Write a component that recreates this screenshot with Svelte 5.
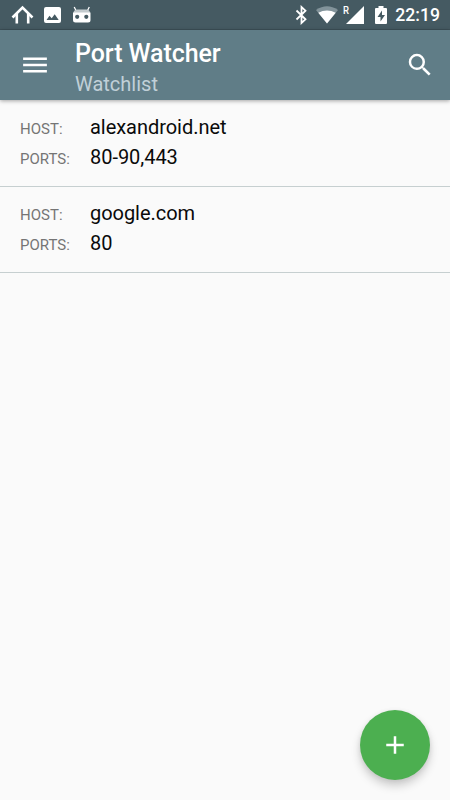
<script lang="ts">
  type WatchItem = {
    host: string;
    ports: string;
  };

  const items: WatchItem[] = [
    { host: 'alexandroid.net', ports: '80-90,443' },
    { host: 'google.com', ports: '80' },
  ];
</script>

<style>
  :global(body) {
    background: #fafafa;
  }

  .screen {
    position: relative;
    display: flex;
    flex-direction: column;
    height: 800px;
    overflow: hidden;
    background: #fafafa;
    font-family: Roboto, sans-serif;
  }

  svg {
    display: block;
    flex: none;
  }

  button {
    display: block;
    padding: 0;
    border: none;
    background: none;
    color: white;
  }

  .status-bar {
    display: flex;
    justify-content: space-between;
    align-items: center;
    box-sizing: border-box;
    height: 30px;
    padding: 0 10px 0 11px;
    border-bottom: 1px solid #3d5058;
    background: #455a62;
    color: white;
  }

  .status-icons {
    display: flex;
    align-items: center;
  }

  .notifications {
    gap: 10px;
  }

  .wifi {
    margin-left: 8px;
  }

  .signal {
    margin-left: 5px;
  }

  .battery {
    margin: 0 8px 0 10px;
  }

  .clock {
    padding-top: 1px;
    font-size: 17.6px;
    font-weight: 500;
    line-height: 30px;
  }

  .app-bar {
    display: flex;
    align-items: center;
    height: 70px;
    padding: 0 15px 0 20px;
    background: #607d87;
    box-shadow: 0 1px 4px rgba(0, 0, 0, 0.35);
  }

  .titles {
    flex: 1;
    padding: 7px 0 0 25px;
  }

  h1 {
    margin: 0;
    font-size: 25px;
    font-weight: 500;
    letter-spacing: -0.08px;
    line-height: 30px;
    color: white;
  }

  .titles p {
    margin: 0;
    font-size: 20px;
    line-height: 30px;
    color: #c0d0d8;
  }

  .watchlist {
    margin: 0;
    padding: 1px 0 0;
    list-style: none;
  }

  .watchlist li {
    display: grid;
    grid-template-columns: 70px 1fr;
    grid-auto-rows: 30px;
    align-items: baseline;
    height: 86px;
    box-sizing: border-box;
    padding: 11px 20px 0;
    border-bottom: 1px solid #c6cfd0;
  }

  .label {
    font-size: 15px;
    line-height: 30px;
    color: #757575;
  }

  .value {
    font-size: 20px;
    letter-spacing: -0.04px;
    line-height: 30px;
    color: #0a0a0a;
  }

  .fab {
    position: absolute;
    right: 20px;
    bottom: 20px;
    display: flex;
    align-items: center;
    justify-content: center;
    width: 70px;
    height: 70px;
    border-radius: 50%;
    background: #4caf50;
    box-shadow: 0 6px 10px rgba(0, 0, 0, 0.18), 0 1px 5px rgba(0, 0, 0, 0.08);
  }
</style>

<div class="screen">
  <div class="status-bar">
    <div class="status-icons notifications">
      <!-- home -->
      <svg width="23" height="20" viewBox="0 0 23 20" fill="none" stroke="white" stroke-width="2.6">
        <path d="M1.5 12.5 11.5 2.5l10 10" />
        <path d="M5.8 9v9.5M17.2 9v9.5" />
      </svg>
      <!-- picture -->
      <svg width="17" height="18" viewBox="0 0 17 18" fill="white">
        <path fill-rule="evenodd" d="M2 1h13q2 0 2 2v12q0 2-2 2H2q-2 0-2-2V3q0-2 2-2zM2.5 14h12.2l-4-5.7-3 4-2.2-2.6z" />
      </svg>
      <!-- robot head -->
      <svg width="22" height="20" viewBox="0 0 22 20">
        <path d="M3.2 2 5 5.500M18.300 2 16.500 5.500" stroke="white" stroke-width="1.300" />
        <path d="M2.500 8q0-3.500 4-3.500h8.500q4 0 4 3.500z" fill="#c3cbce" />
        <path d="M2 7.500h17.500V15q0 2.500-2.500 2.500H4.500Q2 17.500 2 15z" fill="white" />
        <circle cx="6.200" cy="11.800" r="2.100" fill="#455a62" />
        <circle cx="15.300" cy="11.800" r="2.100" fill="#455a62" />
      </svg>
    </div>

    <div class="status-icons">
      <!-- bluetooth -->
      <svg width="13" height="20" viewBox="0 0 13 20" fill="none" stroke="white" stroke-width="1.800">
        <path d="M1.500 5.500 10.500 14.300 6.500 18V2l4 3.700-9 8.800" />
      </svg>
      <!-- wifi -->
      <svg class="wifi" width="22" height="20" viewBox="0 0 22 20">
        <path d="M0 5Q11-2.500 22 5L11 18.500z" fill="#82939a" />
        <path d="M2.300 7.800Q11 3.300 19.700 7.800L11 18.500z" fill="white" />
      </svg>
      <!-- signal with roaming mark -->
      <svg class="signal" width="22" height="20" viewBox="0 0 22 20" fill="white">
        <path d="M21 1v18H3z" />
        <text x="0" y="9" font-size="10" font-weight="500" textLength="6" lengthAdjust="spacingAndGlyphs">R</text>
      </svg>
      <!-- battery, charging -->
      <svg class="battery" width="12" height="20" viewBox="0 0 12 20">
        <path d="M3.500 1h5v2H11q1 0 1 1v14q0 1-1 1H1q-1 0-1-1V4q0-1 1-1h2.500z" fill="white" />
        <path d="M7 5.500 2.500 12h3v4.500L10 10H7z" fill="#455a62" />
      </svg>
      <span class="clock">22:19</span>
    </div>
  </div>

  <header class="app-bar">
    <button aria-label="Menu">
      <svg width="30" height="30" viewBox="0 0 24 24" fill="currentColor">
        <path d="M2.500 18h19v-2h-19v2zm0-5h19v-2h-19v2zm0-7v2h19V6h-19z" />
      </svg>
    </button>
    <div class="titles">
      <h1>Port Watcher</h1>
      <p>Watchlist</p>
    </div>
    <button aria-label="Search">
      <svg width="30" height="30" viewBox="0 0 24 24" fill="currentColor">
        <path d="M15.500 14h-.79l-.28-.27A6.471 6.471 0 0 0 16 9.500 6.500 6.500 0 1 0 9.500 16c1.610 0 3.090-.59 4.230-1.570l.27.28v.79l5 4.990L20.490 19l-4.990-5zm-6 0C7.010 14 5 11.990 5 9.500S7.010 5 9.500 5 14 7.010 14 9.500 11.990 14 9.500 14z" />
      </svg>
    </button>
  </header>

  <ul class="watchlist">
    {#each items as item}
      <li>
        <span class="label">HOST:</span>
        <span class="value">{item.host}</span>
        <span class="label">PORTS:</span>
        <span class="value">{item.ports}</span>
      </li>
    {/each}
  </ul>

  <button class="fab" aria-label="Add">
    <svg width="30" height="30" viewBox="0 0 24 24" fill="currentColor">
      <path d="M19 13h-6v6h-2v-6H5v-2h6V5h2v6h6v2z" />
    </svg>
  </button>
</div>
